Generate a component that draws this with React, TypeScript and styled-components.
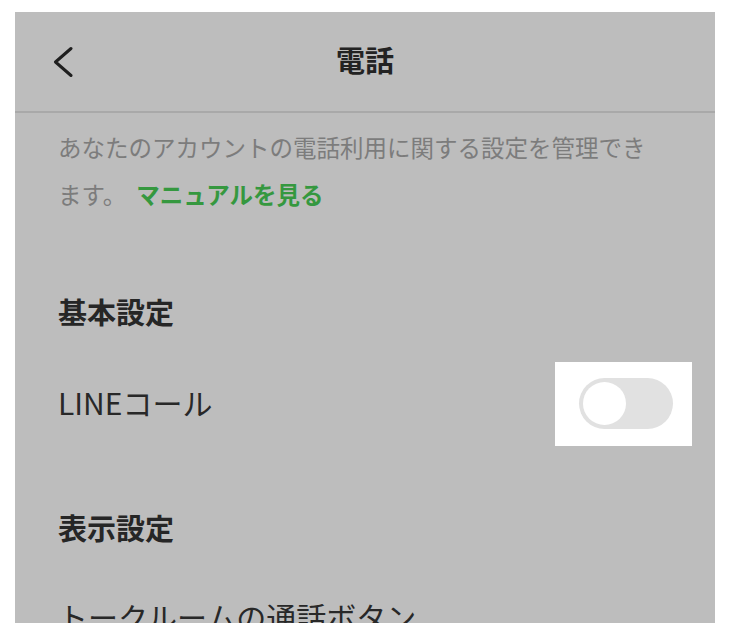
import React from "react";
import styled, { createGlobalStyle } from "styled-components";

const Global = createGlobalStyle`
  html, body {
    margin: 0;
    padding: 0;
    background: #ffffff;
  }
  body {
    font-family: "Noto Sans CJK JP", "Noto Sans", sans-serif;
  }
`;

const Page = styled.div`
  padding: 12px 0 0 15px;
`;

const Panel = styled.div`
  width: 700px;
  height: 611px;
  background: #bdbdbd;
  overflow: hidden;
  display: flex;
  flex-direction: column;
`;

const Header = styled.header`
  height: 99px;
  flex: none;
  border-bottom: 2px solid #a9a9a9;
  display: grid;
  grid-template-columns: 1fr auto 1fr;
  align-items: center;
  padding: 0 38px;
`;

const BackButton = styled.button`
  justify-self: start;
  display: flex;
  align-items: center;
  padding: 0;
  border: 0;
  background: transparent;
  color: #1f1f1f;
`;

const Title = styled.h1`
  margin: 0 0 5px;
  font-size: 29px;
  line-height: 40px;
  font-weight: 700;
  color: #232323;
`;

const Body = styled.div`
  padding: 0 23px 0 43px;
  display: flex;
  flex-direction: column;
`;

const Description = styled.p`
  margin: 11px 0 0;
  max-width: 600px;
  font-size: 23.5px;
  line-height: 47px;
  color: #7c7c7c;
`;

const ManualLink = styled.a`
  margin-left: 10px;
  font-weight: 700;
  color: #35983f;
  text-decoration: none;
`;

const SectionTitle = styled.h2<{ $gap: number }>`
  margin: ${(p) => p.$gap}px 0 0;
  font-size: 29px;
  line-height: 40px;
  font-weight: 700;
  color: #262626;
`;

const Row = styled.div<{ $gap: number }>`
  margin-top: ${(p) => p.$gap}px;
  height: 86px;
  display: flex;
  align-items: center;
  justify-content: space-between;
  flex: none;
`;

const RowLabel = styled.span`
  font-size: 30px;
  line-height: 40px;
  padding-bottom: 5px;
  color: #282828;
  white-space: nowrap;
`;

const ToggleFrame = styled.div`
  background: #ffffff;
  padding: 16px 19px 17px 24px;
  display: flex;
`;

const Track = styled.div<{ $on: boolean }>`
  width: 94px;
  height: 51px;
  border-radius: 26px;
  background: ${(p) => (p.$on ? "#06c755" : "#e1e1e1")};
  display: flex;
  align-items: center;
  justify-content: ${(p) => (p.$on ? "flex-end" : "flex-start")};
  padding: 0 4px;
  box-sizing: border-box;
`;

const Knob = styled.div`
  width: 43px;
  height: 43px;
  border-radius: 50%;
  background: #ffffff;
`;

const Chevron = () => (
  <svg width="20" height="32" viewBox="0 0 20 32" fill="none">
    <polyline
      points="18,2.5 2.5,16 18,29.5"
      stroke="currentColor"
      strokeWidth="3"
      strokeLinecap="round"
      strokeLinejoin="round"
    />
  </svg>
);

export default function App() {
  return (
    <>
      <Global />
      <Page>
        <Panel>
          <Header>
            <BackButton aria-label="戻る">
              <Chevron />
            </BackButton>
            <Title>電話</Title>
            <span />
          </Header>
          <Body>
            <Description>
              あなたのアカウントの電話利用に関する設定を管理できます。
              <ManualLink href="#">マニュアルを見る</ManualLink>
            </Description>
            <SectionTitle $gap={73}>基本設定</SectionTitle>
            <Row $gap={30}>
              <RowLabel>LINEコール</RowLabel>
              <ToggleFrame>
                <Track $on={false}>
                  <Knob />
                </Track>
              </ToggleFrame>
            </Row>
            <SectionTitle $gap={60}>表示設定</SectionTitle>
            <Row $gap={28}>
              <RowLabel>トークルームの通話ボタン</RowLabel>
            </Row>
          </Body>
        </Panel>
      </Page>
    </>
  );
}
